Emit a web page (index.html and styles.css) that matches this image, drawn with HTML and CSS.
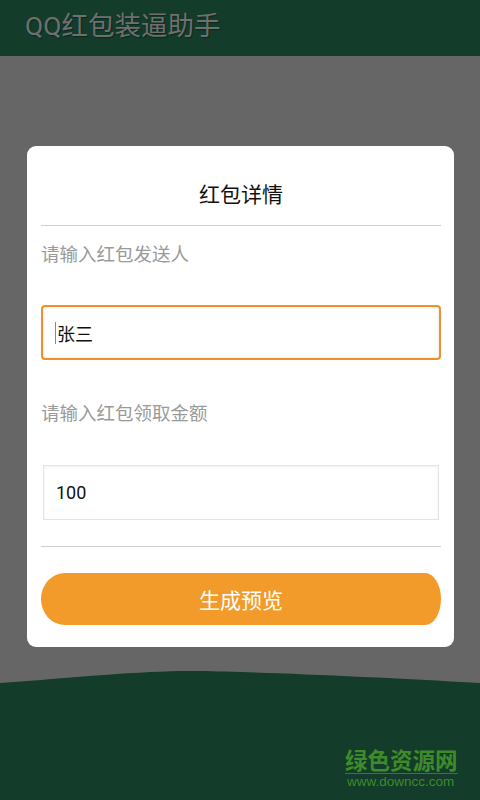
FILE: index.html
```html
<!DOCTYPE html>
<html lang="zh-CN">
<head>
<meta charset="utf-8">
<title>QQ红包装逼助手</title>
<link rel="stylesheet" href="styles.css">
</head>
<body>
<div class="app">
  <header class="topbar">
    <h1 class="app-title">QQ红包装逼助手</h1>
  </header>
  <main class="stage">
    <section class="dialog">
      <h2 class="dialog-title">红包详情</h2>
      <hr class="divider">
      <label class="field-label">请输入红包发送人</label>
      <div class="input input-focused"><span class="caret"></span>张三</div>
      <label class="field-label field-label-2">请输入红包领取金额</label>
      <div class="input input-plain">100</div>
      <hr class="divider divider-2">
      <button class="primary-btn">生成预览</button>
    </section>
  </main>
  <footer class="footer">
    <svg class="wave" width="480" height="153" viewBox="0 0 480 153" preserveAspectRatio="none">
      <rect x="0" y="0" width="480" height="153" fill="#666666"/>
      <path d="M0 36 C 80 30, 150 23, 200 24 C 260 25, 380 30, 480 36 L480 153 L0 153 Z" fill="#133c2a"/>
    </svg>
    <div class="watermark">
      <div class="wm-cn">绿色资源网</div>
      <div class="wm-url">www.downcc.com</div>
    </div>
  </footer>
</div>
</body>
</html>
```
FILE: styles.css
```css
* { box-sizing: border-box; }
html, body { margin: 0; padding: 0; }
body {
  width: 480px;
  height: 800px;
  overflow: hidden;
  font-family: "Noto Sans CJK SC", "Noto Sans", Roboto, sans-serif;
}
.app {
  display: flex;
  flex-direction: column;
  width: 480px;
  height: 800px;
}
.topbar {
  height: 56px;
  background: #133c2a;
  display: flex;
  align-items: center;
  padding-left: 25px;
  flex: 0 0 auto;
}
.app-title {
  margin: 0;
  font-family: Roboto, "Noto Sans CJK SC", sans-serif;
  font-weight: 400;
  font-size: 26.5px;
  line-height: 30px;
  color: #6f6f6f;
  text-shadow: 1px 1px 1px rgba(0,0,0,0.35);
  position: relative;
  top: -2px;
}
.stage {
  background: #666666;
  padding: 90px 26px 0 27px;
  flex: 0 0 auto;
}
.dialog {
  width: 427px;
  height: 501px;
  background: #ffffff;
  border-radius: 9px;
  padding: 32px 13px 0 14px;
  display: flex;
  flex-direction: column;
}
.dialog-title {
  margin: 0;
  text-align: center;
  font-weight: 400;
  font-size: 21px;
  line-height: 30px;
  color: #111;
}
.divider {
  border: 0;
  height: 1px;
  background: #cfcfcf;
  margin: 17px 0 0 0;
}
.field-label {
  display: block;
  margin-top: 15px;
  font-size: 18.5px;
  line-height: 24px;
  color: #9a9a9a;
}
.field-label-2 { margin-top: 40px; }
.input {
  display: flex;
  align-items: center;
  font-size: 18px;
  color: #111;
}
.input-focused {
  margin-top: 40px;
  height: 55px;
  border: 2.5px solid #f0902a;
  border-radius: 4px;
  padding-left: 12px;
  box-shadow: inset 0 0 3px rgba(0,0,0,0.12);
}
.caret {
  width: 1px;
  height: 22px;
  background: #888;
  margin-right: 1px;
}
.input-plain {
  margin: 41px 2px 0 2px;
  height: 55px;
  border: 1px solid #e4e4e4;
  padding-left: 12px;
  box-shadow: inset 0 1px 3px rgba(0,0,0,0.06);
  font-family: Roboto, "Noto Sans CJK SC", sans-serif;
}
.divider-2 { margin-top: 26px; }
.primary-btn {
  margin-top: 26px;
  height: 52px;
  border: 0;
  background: #f29b2b;
  border-radius: 24px 16px 16px 24px / 26px 26px 26px 26px;
  color: #ffffff;
  font-family: "Noto Sans CJK SC", sans-serif;
  font-size: 21px;
  padding: 0;
}
.footer {
  position: relative;
  flex: 1 1 auto;
  height: 153px;
}
.wave {
  display: block;
  width: 480px;
  height: 153px;
}
.watermark {
  position: absolute;
  left: 345px;
  top: 100px;
  width: 113px;
}
.wm-cn {
  font-family: "Noto Sans CJK SC", sans-serif;
  font-weight: 700;
  font-size: 22.5px;
  line-height: 24px;
  color: #3f8a2b;
  white-space: nowrap;
  letter-spacing: 0;
  padding-bottom: 2px;
  border-bottom: 1px solid #4a6a4c;
}
.wm-url {
  font-family: "Liberation Sans", Arial, sans-serif;
  font-size: 13.5px;
  line-height: 14px;
  color: #3f8a2b;
  padding-top: 1px;
  padding-left: 2px;
  white-space: nowrap;
}
```
